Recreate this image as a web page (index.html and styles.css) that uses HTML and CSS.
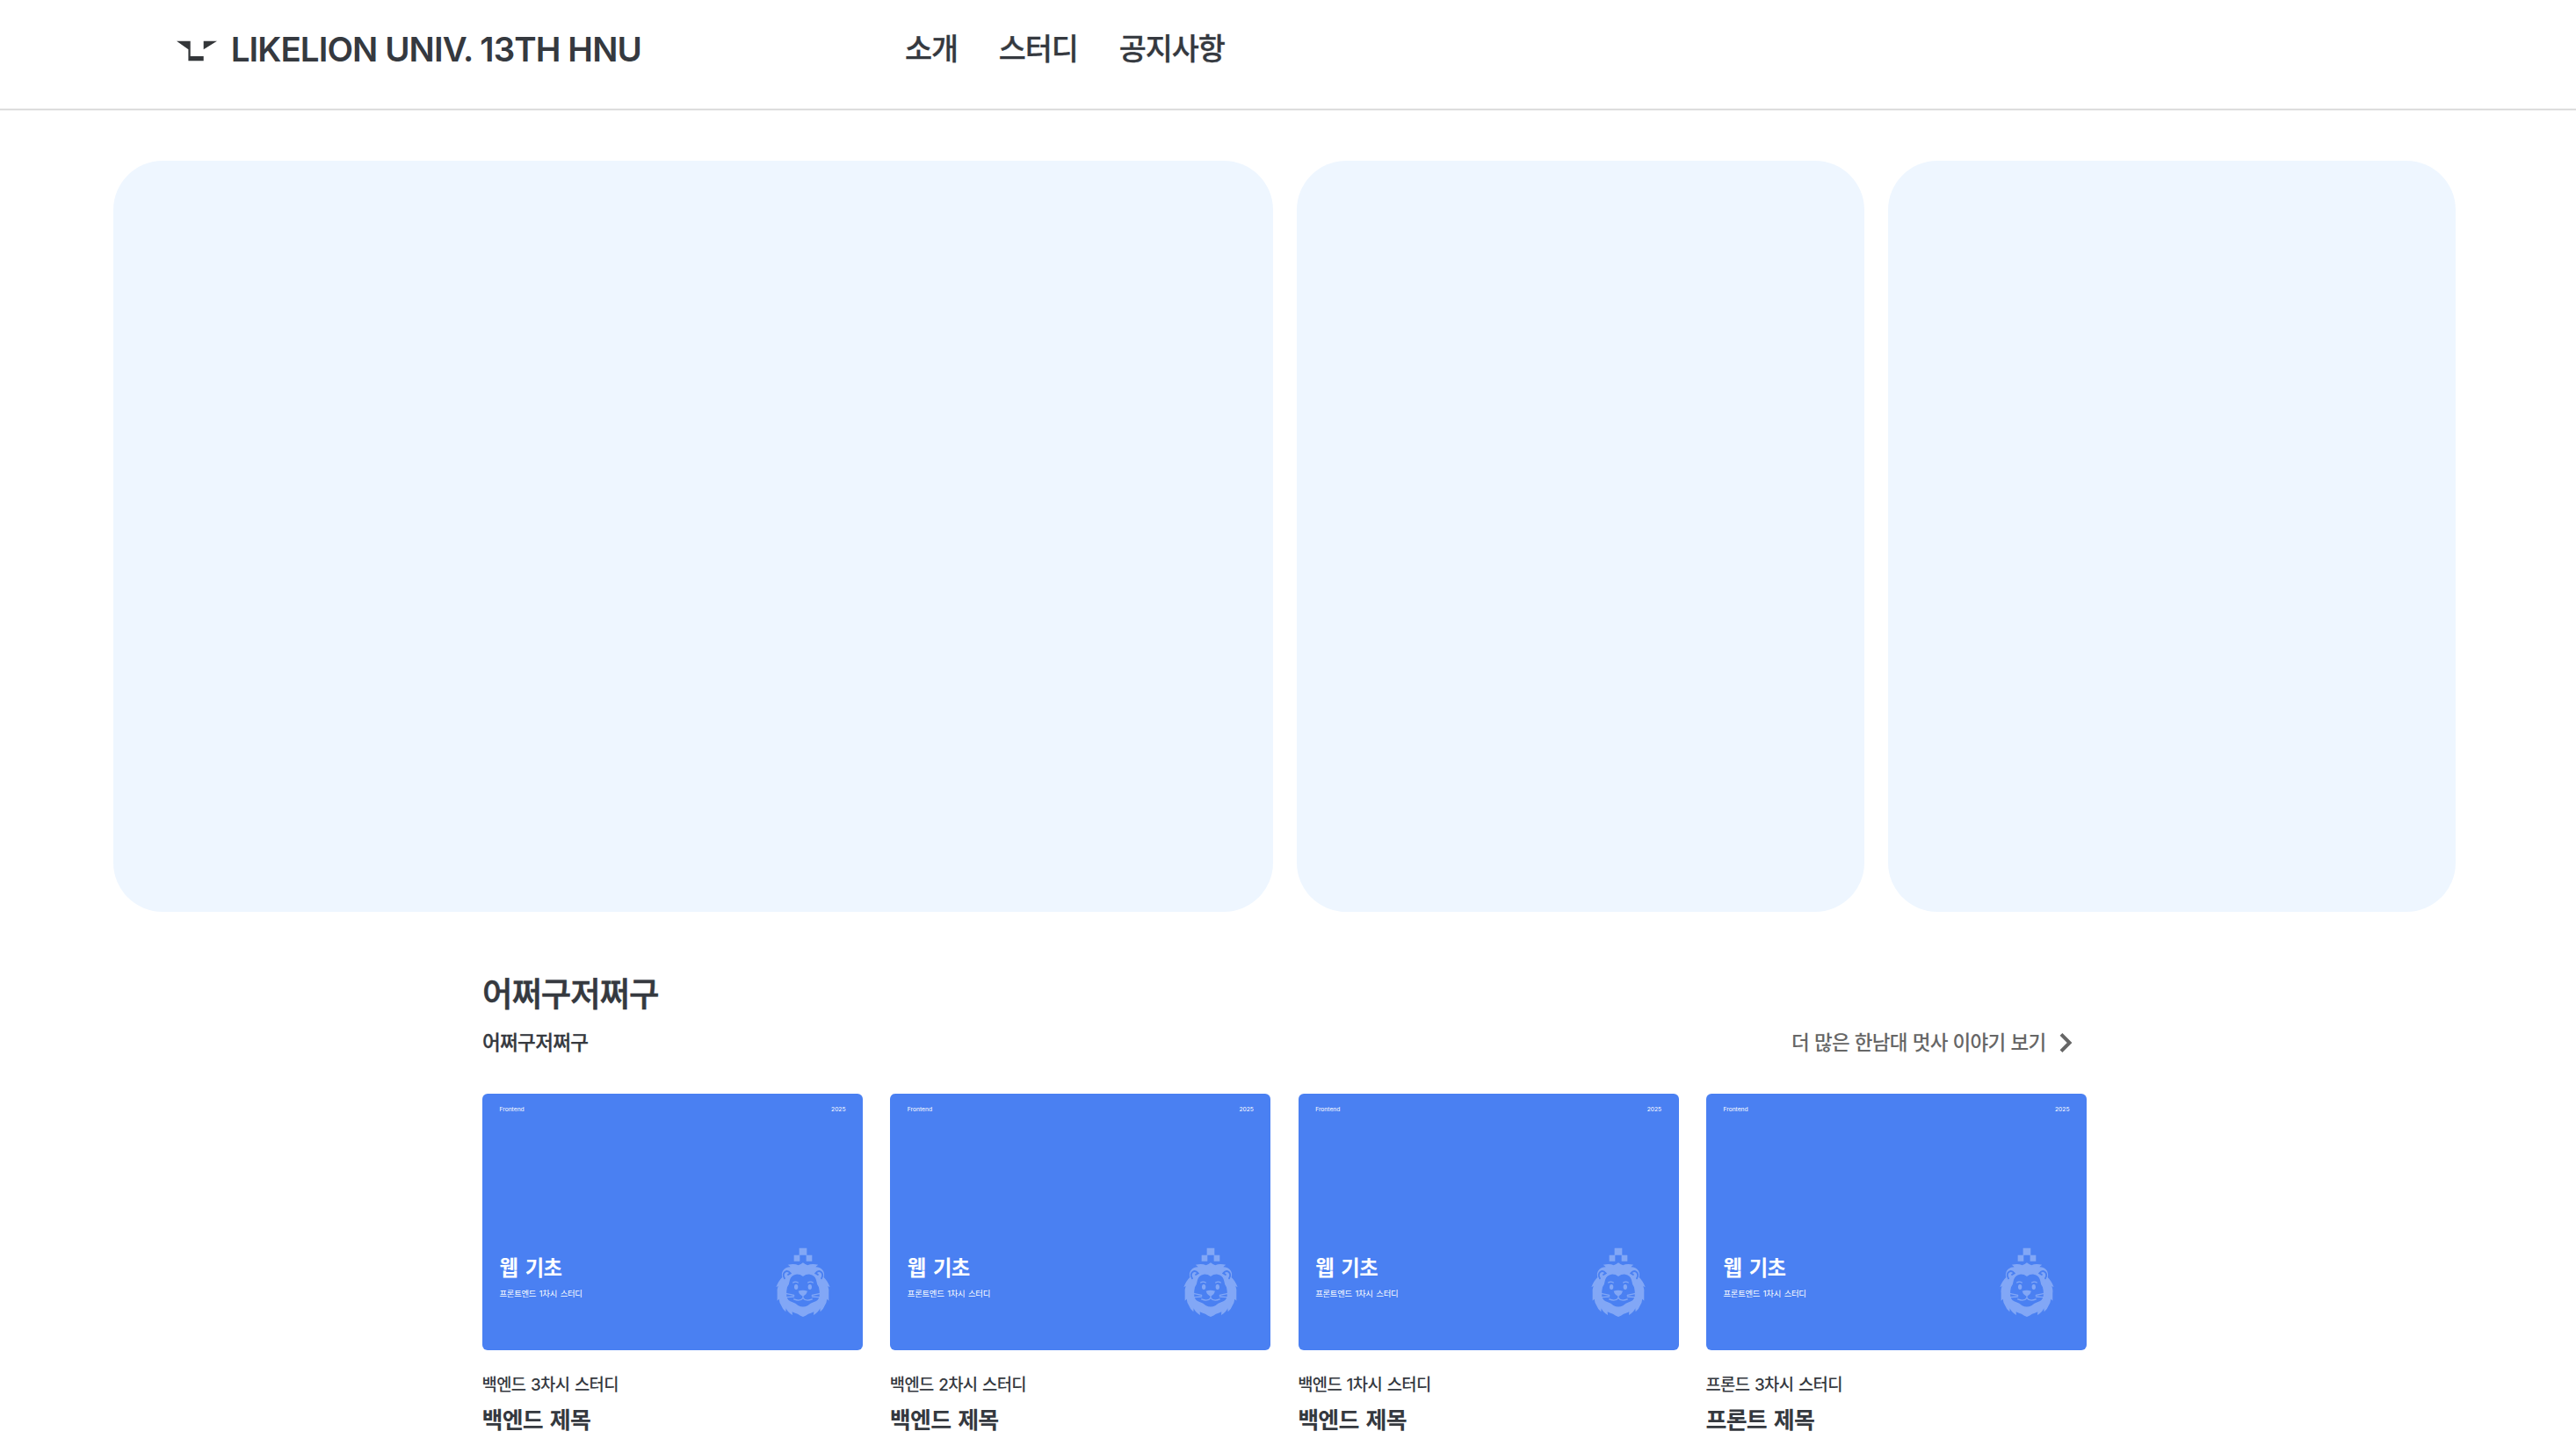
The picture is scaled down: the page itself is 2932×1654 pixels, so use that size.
FILE: index.html
```
<!DOCTYPE html>
<html lang="ko">
<head>
<meta charset="utf-8">
<title>LIKELION UNIV. 13TH HNU</title>
<link rel="stylesheet" href="styles.css">
</head>
<body>
<svg class="defs" width="0" height="0" aria-hidden="true">
  <symbol id="lion" viewBox="60 55 205 250">
    <g opacity=".31">
      <path fill="#fff" d="M149 63h26v24h-26zM131 87h20v21h-20zM173 87h20v21h-20z"/>
      <path fill="#fff" fill-rule="evenodd" d="M162 113 Q169 119 178 122 Q190 115 214 120 Q208 124 205 128 Q222 128 230 140 Q237 150 233 163 Q246 175 254 197 L247 193 Q252 206 250 217 L250 243 L244 237 Q243 251 235 262 Q232 272 221 281 L220 269 Q215 283 198 292 L199 281 Q188 287 180 288 Q173 293 162 298 Q151 293 144 288 Q136 287 125 281 L126 292 Q109 283 104 269 L103 281 Q92 272 89 262 Q81 251 80 237 L74 243 L74 217 Q72 206 77 193 L70 197 Q78 175 91 163 Q87 150 94 140 Q102 128 119 128 Q116 124 110 120 Q134 115 146 122 Q155 119 162 113 Z
        M162 160 Q152 152 138 153 Q122 155 117 172 Q115 187 108 197 Q104 212 106 228 Q109 243 126 248 Q137 251 145 259 Q162 268 179 259 Q187 251 198 248 Q215 243 218 228 Q220 212 216 197 Q209 187 207 172 Q202 155 186 153 Q172 152 162 160 Z"/>
      <g fill="#fff">
        <ellipse cx="138.500" cy="196" rx="6.500" ry="9"/>
        <ellipse cx="185.500" cy="196" rx="6.500" ry="9"/>
        <path d="M146 210 Q161 204 177 210 Q175 220 165 226 H158 Q148 220 146 210Z"/>
      </g>
      <g fill="none" stroke="#fff" stroke-width="4" stroke-linecap="round">
        <path d="M128 181 Q136 176 145 181M179 181 Q188 176 196 181"/>
        <path d="M162 224 V233 M131 238 Q152 247 162 234 Q172 247 193 238"/>
        <path d="M106 219 L131 224M106 231 L131 229M218 219 L193 224M218 231 L193 229"/>
      </g>
    </g>
    <g fill="none" stroke="#4a80f2" stroke-width="5.500" stroke-linecap="round">
      <path d="M99 167 Q91 153 100 145 Q110 138 119 149 Q115 151 111 154"/>
      <path d="M225 167 Q233 153 224 145 Q214 138 205 149 Q209 151 213 154"/>
    </g>
  </symbol>
</svg>

<header class="header">
  <a class="brand">
    <svg class="brand-mark" viewBox="0 0 46 24" aria-hidden="true">
      <path d="M0 .7H15.7V18H30.7V23.3H13.4V10.2ZM30.7 .7H46L30.7 10.2Z" fill="#333639"/>
    </svg>
    <span class="brand-name">LIKELION UNIV. 13TH HNU</span>
  </a>
  <nav class="nav"><a>소개</a><a>스터디</a><a>공지사항</a></nav>
</header>

<main>
  <section class="hero">
    <div class="panel"></div>
    <div class="panel"></div>
    <div class="panel"></div>
  </section>

  <section class="stories">
    <h2 class="stories-title">어쩌구저쩌구</h2>
    <div class="stories-bar">
      <p class="stories-sub">어쩌구저쩌구</p>
      <a class="more"><span>더 많은 한남대 멋사 이야기 보기</span>
        <svg class="chevron" viewBox="0 0 15 24" aria-hidden="true"><path d="M2 2.3L11.6 12L2 21.7" fill="none" stroke="#666" stroke-width="4"/></svg>
      </a>
    </div>
    <div class="cards">
      <article class="card">
        <div class="thumb">
          <div class="thumb-top"><span>Frontend</span><span>2025</span></div>
          <div class="thumb-bottom">
            <div class="thumb-text"><h4>웹 기초</h4><p>프론트엔드 1차시 스터디</p></div>
            <svg class="lion"><use href="#lion"/></svg>
          </div>
        </div>
        <p class="card-label">백엔드 3차시 스터디</p>
        <h3 class="card-title">백엔드 제목</h3>
      </article>
      <article class="card">
        <div class="thumb">
          <div class="thumb-top"><span>Frontend</span><span>2025</span></div>
          <div class="thumb-bottom">
            <div class="thumb-text"><h4>웹 기초</h4><p>프론트엔드 1차시 스터디</p></div>
            <svg class="lion"><use href="#lion"/></svg>
          </div>
        </div>
        <p class="card-label">백엔드 2차시 스터디</p>
        <h3 class="card-title">백엔드 제목</h3>
      </article>
      <article class="card">
        <div class="thumb">
          <div class="thumb-top"><span>Frontend</span><span>2025</span></div>
          <div class="thumb-bottom">
            <div class="thumb-text"><h4>웹 기초</h4><p>프론트엔드 1차시 스터디</p></div>
            <svg class="lion"><use href="#lion"/></svg>
          </div>
        </div>
        <p class="card-label">백엔드 1차시 스터디</p>
        <h3 class="card-title">백엔드 제목</h3>
      </article>
      <article class="card">
        <div class="thumb">
          <div class="thumb-top"><span>Frontend</span><span>2025</span></div>
          <div class="thumb-bottom">
            <div class="thumb-text"><h4>웹 기초</h4><p>프론트엔드 1차시 스터디</p></div>
            <svg class="lion"><use href="#lion"/></svg>
          </div>
        </div>
        <p class="card-label">프론드 3차시 스터디</p>
        <h3 class="card-title">프론트 제목</h3>
      </article>
    </div>
  </section>
</main>
</body>
</html>
```
FILE: styles.css
```
* { box-sizing: border-box; margin: 0; padding: 0; }

html, body { height: 1654px; overflow: hidden; }

body {
  background: #fff;
  color: #35393f;
  font-family: Inter, "Noto Sans CJK KR", sans-serif;
}

.defs { display: none; }

/* Header */
.header {
  display: flex;
  align-items: flex-start;
  height: 125px;
  padding: 32px 0 0 201px;
  border-bottom: 1px solid #d6d6d6;
  box-shadow: 0 1px 0 #ececec, inset 0 -1px 0 #f3f3f3;
}

.brand { display: flex; width: 829px; }

.brand-mark { width: 46px; height: 24px; margin: 14px 15.7px 0 0; }

.brand-name {
  font-size: 38.5px;
  font-weight: 600;
  line-height: 48px;
  letter-spacing: -0.92px;
}

.nav {
  display: flex;
  gap: 46.8px;
  margin-top: 4px;
  font-size: 33.75px;
  font-weight: 500;
  line-height: 40px;
  letter-spacing: -1.05px;
  -webkit-text-stroke: 0.3px currentColor;
}

/* Hero panels */
.hero {
  display: grid;
  grid-template-columns: 1320px 646px 646px;
  gap: 27px;
  height: 855px;
  margin: 58px 0 0 129px;
}

.panel { border-radius: 56px; background: #eef6ff; }

/* Stories */
.stories { width: 1826px; margin: 69.5px 0 0 549px; }

.stories-title {
  font-size: 37.5px;
  font-weight: 500;
  line-height: 48px;
  letter-spacing: -1.1px;
  -webkit-text-stroke: 0.6px currentColor;
}

.stories-bar {
  display: flex;
  justify-content: space-between;
  height: 30px;
  margin: 16px 16px 43.5px 0;
  font-size: 22.5px;
  font-weight: 500;
  line-height: 30px;
  letter-spacing: -0.65px;
}

.stories-sub { -webkit-text-stroke: 0.3px currentColor; }

.more { display: flex; gap: 15.5px; color: #666; word-spacing: 0.4px; }

.chevron { width: 15px; height: 24px; margin-top: 3px; }

.cards {
  display: grid;
  grid-template-columns: repeat(4, 433px);
  justify-content: space-between;
}

.thumb {
  display: flex;
  flex-direction: column;
  justify-content: space-between;
  height: 291.7px;
  padding: 12.5px 19.5px 35px 19.5px;
  border-radius: 6px;
  background: #4a80f2;
  color: #fff;
}

.thumb-top {
  display: flex;
  justify-content: space-between;
  font-size: 6.7px;
  line-height: 10px;
}

.thumb-bottom {
  display: flex;
  justify-content: space-between;
  align-items: flex-end;
  padding-right: 14.5px;
}

.thumb-text { padding-bottom: 22px; }

.thumb-text h4 {
  font-size: 23.3px;
  font-weight: 700;
  line-height: 30px;
  letter-spacing: -0.6px;
  word-spacing: 3.4px;
}

.thumb-text p {
  margin-top: 7px;
  font-size: 9.4px;
  line-height: 14px;
  letter-spacing: -0.29px;
  word-spacing: 1.3px;
}

.lion { width: 68.3px; height: 83.3px; }

.card-label {
  margin: 28px 0 0 -0.5px;
  font-size: 18.75px;
  font-weight: 500;
  line-height: 24px;
  letter-spacing: -0.62px;
  word-spacing: 1.2px;
}

.card-title {
  margin: 10px 0 0 -0.5px;
  font-size: 26px;
  font-weight: 700;
  line-height: 36px;
  letter-spacing: -0.75px;
  word-spacing: 2.4px;
}
```
